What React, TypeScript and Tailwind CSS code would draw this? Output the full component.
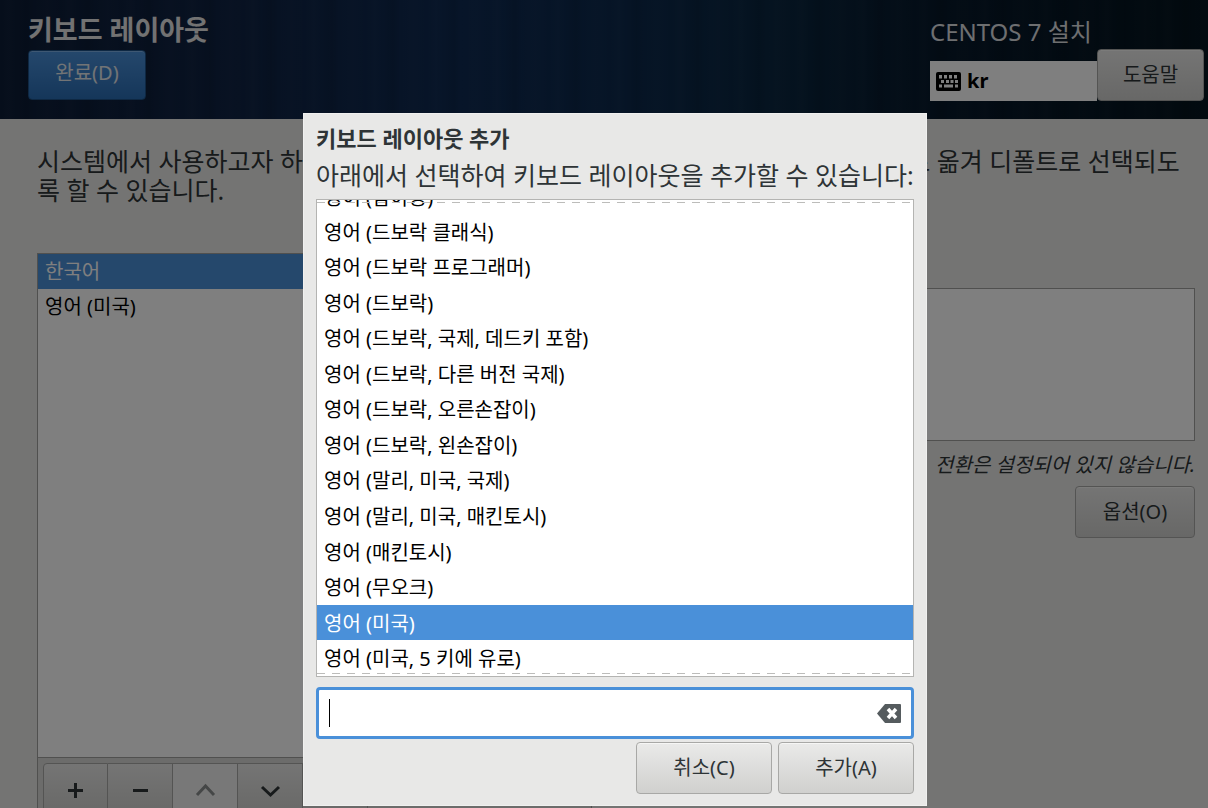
import React, { useState } from 'react';
import { clsx } from 'clsx';

const LAYOUTS = [
  '영어 (드보락 클래식)',
  '영어 (드보락 프로그래머)',
  '영어 (드보락)',
  '영어 (드보락, 국제, 데드키 포함)',
  '영어 (드보락, 다른 버전 국제)',
  '영어 (드보락, 오른손잡이)',
  '영어 (드보락, 왼손잡이)',
  '영어 (말리, 미국, 국제)',
  '영어 (말리, 미국, 매킨토시)',
  '영어 (매킨토시)',
  '영어 (무오크)',
  '영어 (미국)',
  '영어 (미국, 5 키에 유로)',
];

const GTK_BUTTON = 'rounded-[4px] border border-[#a8a8a6] bg-linear-to-b from-[#eaeae9] to-[#d0d0ce] text-xl text-[#2e3436] shadow-[inset_0_1px_#f6f6f5]';

const KeyboardIcon = () => (
  <svg width="25" height="19" viewBox="0 0 25 19" aria-hidden="true">
    <rect width="25" height="19" rx="2" fill="#000" />
    <g fill="#fff">
      <path d="M3 3h3v3.500H3zM8 3h3v3.500H8zM13 3h3v3.500h-3zM18 3h3v3.500h-3z" />
      <path d="M5 8h3v3H5zM10 8h3v3h-3zM14.500 8h3v3h-3zM19 8h3v3h-3z" />
      <path d="M3 12.500h3v3H3zM8 12.500h9v3H8zM19 12.500h3v3h-3z" />
    </g>
  </svg>
);

const ClearIcon = () => (
  <svg width="24" height="19" viewBox="0 0 24 19" aria-hidden="true">
    <path d="M8 0h15a1 1 0 0 1 1 1v17a1 1 0 0 1-1 1H8L0 9.500z" fill="#555b5e" />
    <path d="M11 5l8 9M19 5l-8 9" stroke="#fff" strokeWidth="3.500" />
  </svg>
);

const TOOLS = [
  { label: '추가', d: 'M1 9.500h15M8.500 2v15' },
  { label: '제거', d: 'M1 9.500h15' },
  { label: '위로', d: 'M0 14l8.500-9 8.500 9', disabled: true },
  { label: '아래로', d: 'M0 6l8.500 8L17 6' },
  { label: '미리보기', d: 'M0 3h17v11H0z' },
];

const Header = () => (
  <header className="flex h-[119px] shrink-0 justify-between bg-[repeating-linear-gradient(90deg,#ffffff00_0,#ffffff04_9px,#ffffff00_16px,#00000014_27px,#ffffff00_34px,#ffffff03_47px,#ffffff00_61px),linear-gradient(90deg,#0c1c36_0%,#0f2344_20%,#0e2a52_38%,#0c294c_52%,#0a2640_64%,#06182a_78%,#04141e_100%)] pr-1 pl-7">
    <div className="flex flex-col items-start">
      <h1 className="mt-3 h-9 text-[27px] leading-9 font-bold text-[#e4e4e4]">키보드 레이아웃</h1>
      <button className="mt-[2px] h-[50px] w-[118px] rounded-[4px] border border-[#1c5187] bg-linear-to-b from-[#4a90d9] to-[#2a6db4] pb-1 text-xl text-[#e4e8ec] shadow-[inset_0_1px_#7cb0e6]">
        완료(D)
      </button>
    </div>
    <div className="flex w-[274px] flex-col">
      <div className="mt-4 h-8 text-2xl leading-8 text-[#dcdee0]">CENTOS 7 설치</div>
      <div className="mt-px flex items-end">
        <div className="flex h-10 flex-1 items-center gap-[6px] bg-white pl-[6px] text-xl font-bold text-black">
          <KeyboardIcon />
          kr
        </div>
        <button className={clsx(GTK_BUTTON, 'h-[52px] w-[107px]')}>도움말</button>
      </div>
    </div>
  </header>
);

const Installer = () => (
  <div className="flex h-screen flex-col overflow-hidden bg-[#e8e8e7]">
    <Header />
    <main className="flex min-h-0 flex-1 flex-col pt-7 pr-[13px] pl-[37px]">
      <p className="text-[25px] leading-[29px] break-all text-[#2e3436]">
        시스템에서 사용하고자 하는 키보드 레이아웃을 선택합니다. 원하는 레이아웃을 맨 위로 옮겨 디폴트로 선택되도록 할 수 있습니다.
      </p>
      <div className="mt-[48px] flex flex-1 gap-12">
        <section className="flex flex-1 flex-col">
          <ul className="h-[505px] shrink-0 border border-[#a1a19f] bg-white text-xl">
            <li className="flex h-[35px] items-center bg-[#4a90d9] px-[7px] text-white">한국어</li>
            <li className="flex h-9 items-center px-[7px] text-black">영어 (미국)</li>
          </ul>
          <div className="flex h-16 shrink-0 border-x border-b border-[#a1a19f] bg-[#d9d9d7] px-[5px] py-[5px]">
            {TOOLS.map(tool => (
              <button
                key={tool.label}
                aria-label={tool.label}
                disabled={tool.disabled}
                className={clsx(
                  'flex w-[65px] items-center justify-center border-y border-r border-[#a8a8a6] first:rounded-l-[4px] first:border-l last:rounded-r-[4px]',
                  tool.disabled ? 'bg-[#f1f1f0] text-[#8b8e8f]' : 'bg-linear-to-b from-[#eaeae9] to-[#d0d0ce] text-[#2e3436]',
                )}
              >
                <svg width="17" height="17" viewBox="0 0 17 17" fill="none" stroke="currentColor" strokeWidth="3" overflow="visible">
                  <path d={tool.d} />
                </svg>
              </button>
            ))}
          </div>
        </section>
        <section className="flex flex-1 flex-col items-end">
          <label htmlFor="layout-test" className="h-[35px] self-start text-xl text-[#2e3436]">설정을 시험해보세요:</label>
          <textarea id="layout-test" className="h-[153px] w-full resize-none border border-[#a1a19f] bg-white" />
          <p className="mt-2 h-8 text-xl leading-8 text-[#2e3436] italic">전환은 설정되어 있지 않습니다.</p>
          <button className={clsx(GTK_BUTTON, 'mt-[5px] h-[52px] w-[120px]')}>옵션(O)</button>
        </section>
      </div>
    </main>
  </div>
);

// Dashed edge shown where the list can still be scrolled
const ScrollEdge = ({ className }: { className: string }) => (
  <div className={clsx('absolute inset-x-0 h-px bg-[repeating-linear-gradient(90deg,#bcbcba_0_8px,transparent_8px_15px)]', className)} />
);

const AddLayoutDialog = () => {
  const [selected, setSelected] = useState('영어 (미국)');
  const [query, setQuery] = useState('');

  return (
    <div role="dialog" aria-labelledby="dialog-title" className="flex w-full max-w-[624px] flex-col border border-[#f0f0ef] bg-[#e8e8e7] px-3 pt-2 pb-[11px] text-xl">
      <h2 id="dialog-title" className="h-8 text-[22px] leading-8 font-bold text-[#2e3436]">키보드 레이아웃 추가</h2>
      <p className="h-[45px] text-[25px] leading-[42px] whitespace-nowrap text-[#2e3436]">아래에서 선택하여 키보드 레이아웃을 추가할 수 있습니다:</p>
      <div className="relative h-[478px] border border-[#b4b4b2] bg-white">
        <ul role="listbox" className="flex h-full flex-col">
          <li className="flex h-[14px] items-end overflow-hidden px-[7px] leading-9"><span className="-mb-[2px]">영어 (남아공)</span></li>
          {LAYOUTS.map(name => (
            <li
              key={name}
              role="option"
              aria-selected={name === selected}
              onClick={() => setSelected(name)}
              className={clsx('flex flex-1 items-center px-[7px] pt-[2px] leading-8', name === selected ? 'bg-[#4a90d9] text-white' : 'text-black')}
            >
              {name}
            </li>
          ))}
        </ul>
        <ScrollEdge className="top-[2px]" />
        <ScrollEdge className="bottom-[2px]" />
      </div>
      <div className="mt-[10px] flex h-[52px] items-center rounded-[4px] border-[3px] border-[#4a90d9] bg-white px-[10px]">
        {query === '' && <span className="h-7 w-px bg-black" />}
        <input
          aria-label="레이아웃 검색"
          value={query}
          onChange={e => setQuery(e.target.value)}
          className="min-w-0 flex-1 bg-transparent outline-none"
        />
        <button aria-label="지우기" onClick={() => setQuery('')}><ClearIcon /></button>
      </div>
      <div className="mt-[3px] flex justify-end gap-[6px]">
        <button className={clsx(GTK_BUTTON, 'h-[52px] w-[136px]')}>취소(C)</button>
        <button className={clsx(GTK_BUTTON, 'h-[52px] w-[136px]')}>추가(A)</button>
      </div>
    </div>
  );
};

const App: React.FC = () => (
  <div className="font-['Noto_Sans','Noto_Sans_CJK_KR',sans-serif]">
    <Installer />
    <div className="fixed inset-0 flex items-end justify-center bg-black/50 pb-[2px] pl-[22px]">
      <AddLayoutDialog />
    </div>
  </div>
);

export default App;
